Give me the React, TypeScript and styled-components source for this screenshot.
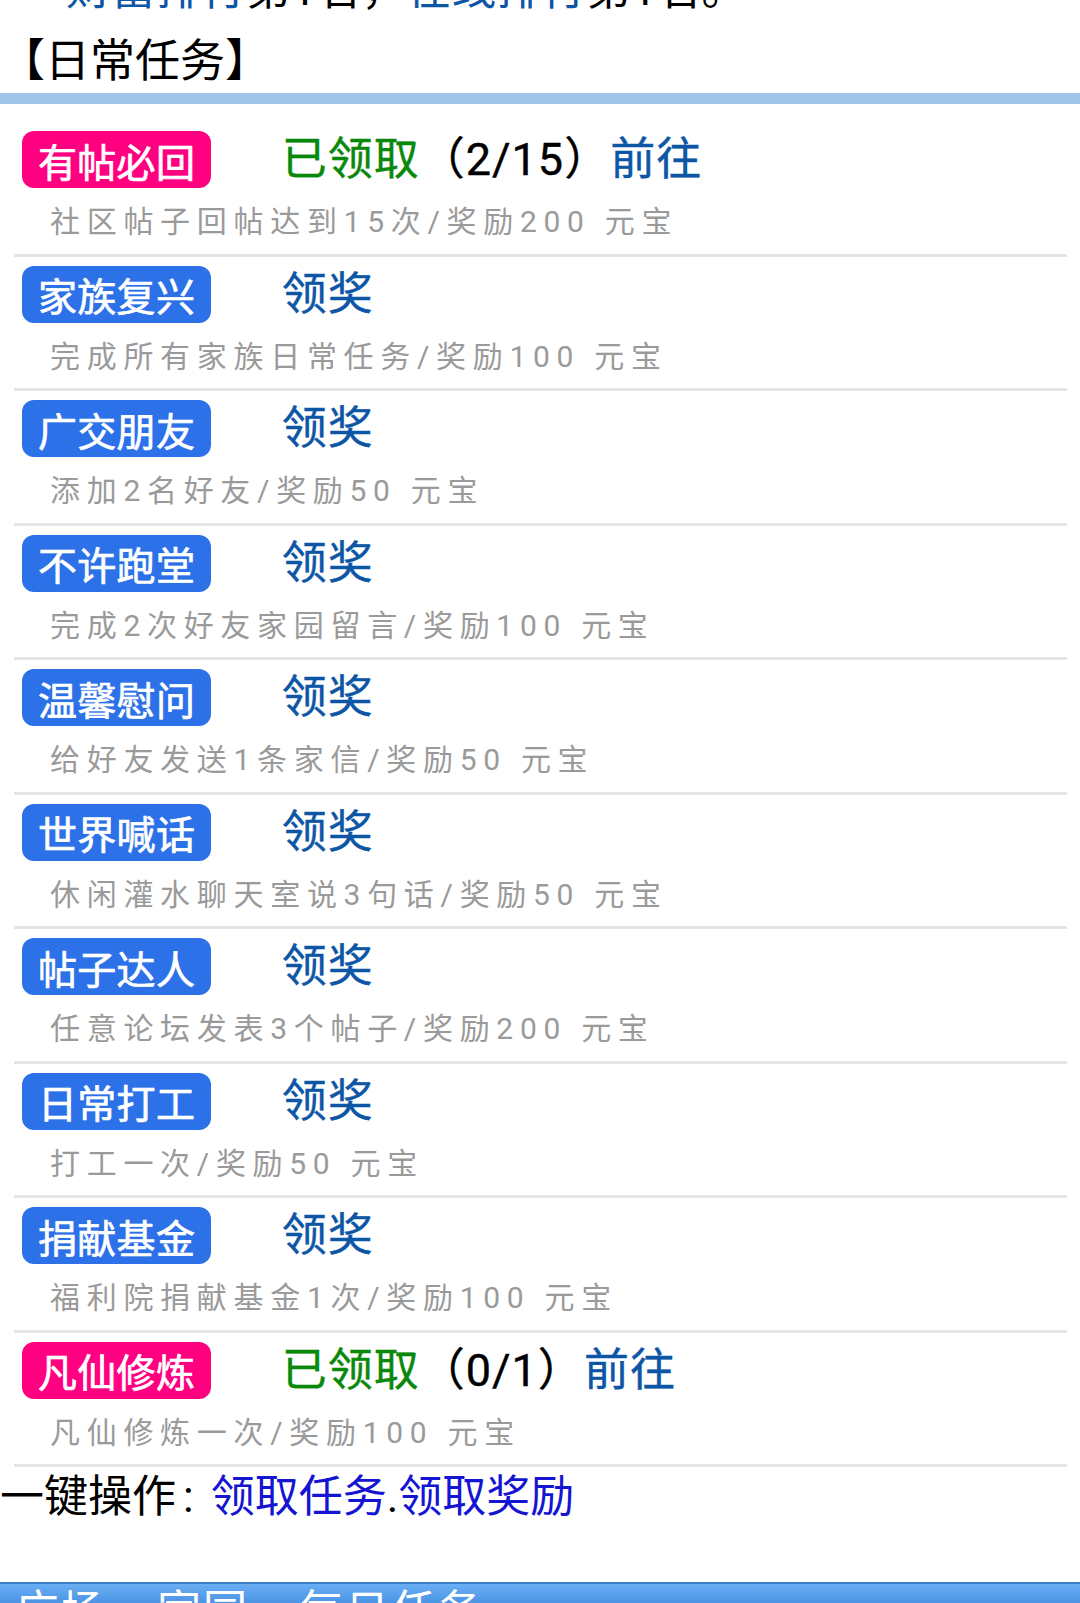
import React from "react";
import styled, { createGlobalStyle } from "styled-components";

const Global = createGlobalStyle`
  html, body {
    margin: 0;
    padding: 0;
    background: #ffffff;
    overflow: hidden;
  }
  body {
    font-family: Roboto, "Noto Sans CJK SC", "Noto Sans", sans-serif;
    color: #000;
  }
`;

const Page = styled.div`
  width: 1080px;
  height: 1603px;
  overflow: hidden;
  display: flex;
  flex-direction: column;
`;

const TopLine = styled.div`
  margin-top: -35px;
  height: 50px;
  line-height: 50px;
  font-size: 45px;
  padding-left: 66px;
  white-space: nowrap;
  flex-shrink: 0;
`;

const Link = styled.span<{ $tone?: "dark" | "bright" }>`
  color: ${(p) => (p.$tone === "bright" ? "#1414d2" : "#0d56a6")};
`;

const SectionTitle = styled.div`
  font-size: 45px;
  line-height: 62px;
  height: 62px;
  padding-top: 16px;
  flex-shrink: 0;
`;

const Divider = styled.div`
  height: 11px;
  background: #9fc5e9;
  flex-shrink: 0;
`;

const List = styled.div`
  margin: 0 13px 0 14px;
  padding-top: 18px;
  display: flex;
  flex-direction: column;
  flex-shrink: 0;
`;

const Row = styled.div`
  padding: 9px 0 9.5px 8px;
  border-bottom: 3px solid #e4e6e6;
  display: flex;
  flex-direction: column;
`;

const TitleLine = styled.div`
  display: flex;
  align-items: center;
  height: 57px;
  white-space: nowrap;
`;

const Badge = styled.span<{ $tone: "pink" | "blue" }>`
  display: inline-flex;
  align-items: center;
  height: 57px;
  padding: 0 15.5px 0 16px;
  border-radius: 12px;
  background: ${(p) => (p.$tone === "pink" ? "#ff0080" : "#2c71e8")};
  color: #fff;
  font-size: 39px;
  letter-spacing: 0.3px;
  -webkit-text-stroke: 0.7px #fff;
`;

const Status = styled.span`
  margin-left: 71px;
  font-size: 45px;
  line-height: 57px;
  letter-spacing: 1px;
  -webkit-text-stroke: 0.4px currentColor;
`;

const Done = styled.span`
  color: #0a880a;
`;

const Count = styled.span`
  color: #000;
`;

const Desc = styled.div`
  margin-top: 11px;
  padding-left: 28px;
  font-size: 30px;
  line-height: 45px;
  letter-spacing: 6.7px;
  color: #9a9a9a;
  white-space: nowrap;
`;

const OneKey = styled.div`
  font-size: 44px;
  line-height: 60px;
  height: 60px;
  white-space: nowrap;
  flex-shrink: 0;
`;

const Colon = styled.span`
  margin: 0 17px 0 7px;
`;

const Spacer = styled.div`
  height: 55px;
  flex-shrink: 0;
`;

const NavBar = styled.div`
  flex-shrink: 0;
  height: 60px;
  border-top: 2px solid #3f7fc8;
  background: linear-gradient(to bottom, #6aaef2 0%, #4d95e6 30%, #3a80d6 100%);
  color: #fff;
  font-size: 44px;
  line-height: 56px;
  letter-spacing: 2px;
  padding-left: 15px;
  white-space: nowrap;
`;

type Task = {
  name: string;
  tone: "pink" | "blue";
  done?: string;
  desc: string;
};

const tasks: Task[] = [
  { name: "有帖必回", tone: "pink", done: "（2/15）", desc: "社区帖子回帖达到15次/奖励200 元宝" },
  { name: "家族复兴", tone: "blue", desc: "完成所有家族日常任务/奖励100 元宝" },
  { name: "广交朋友", tone: "blue", desc: "添加2名好友/奖励50 元宝" },
  { name: "不许跑堂", tone: "blue", desc: "完成2次好友家园留言/奖励100 元宝" },
  { name: "温馨慰问", tone: "blue", desc: "给好友发送1条家信/奖励50 元宝" },
  { name: "世界喊话", tone: "blue", desc: "休闲灌水聊天室说3句话/奖励50 元宝" },
  { name: "帖子达人", tone: "blue", desc: "任意论坛发表3个帖子/奖励200 元宝" },
  { name: "日常打工", tone: "blue", desc: "打工一次/奖励50 元宝" },
  { name: "捐献基金", tone: "blue", desc: "福利院捐献基金1次/奖励100 元宝" },
  { name: "凡仙修炼", tone: "pink", done: "（0/1）", desc: "凡仙修炼一次/奖励100 元宝" },
];

export default function App() {
  return (
    <Page>
      <Global />
      <TopLine>
        <Link>财富排行</Link>第1名，<Link>在线排行</Link>第1名。
      </TopLine>
      <SectionTitle>【日常任务】</SectionTitle>
      <Divider />
      <List>
        {tasks.map((t) => (
          <Row key={t.name}>
            <TitleLine>
              <Badge $tone={t.tone}>{t.name}</Badge>
              {t.done ? (
                <Status>
                  <Done>已领取</Done>
                  <Count>{t.done}</Count>
                  <Link>前往</Link>
                </Status>
              ) : (
                <Status>
                  <Link>领奖</Link>
                </Status>
              )}
            </TitleLine>
            <Desc>{t.desc}</Desc>
          </Row>
        ))}
      </List>
      <OneKey>
        一键操作<Colon>:</Colon>
        <Link $tone="bright">领取任务</Link>.<Link $tone="bright">领取奖励</Link>
      </OneKey>
      <Spacer />
      <NavBar>广场&gt;&gt;家园&gt;&gt;每日任务</NavBar>
    </Page>
  );
}
